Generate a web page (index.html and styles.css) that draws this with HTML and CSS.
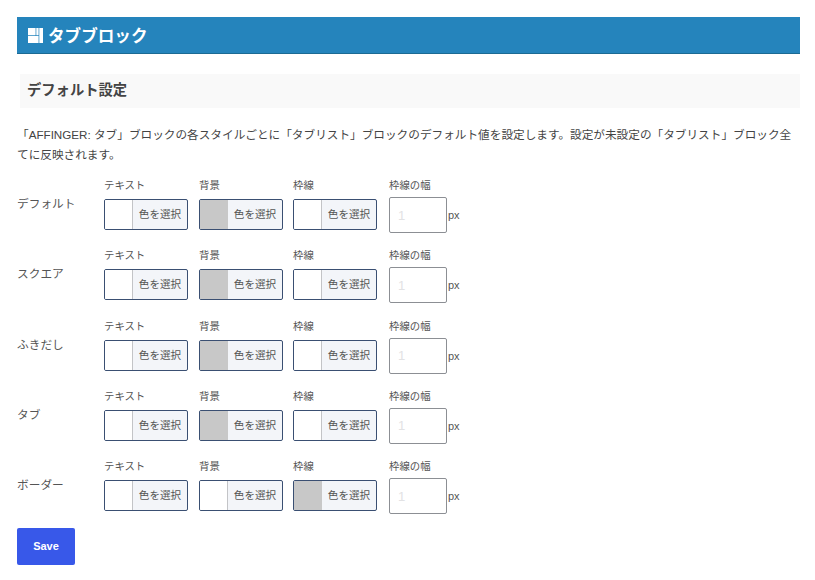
FILE: index.html
```html
<!DOCTYPE html>
<html lang="ja">
<head>
    <meta charset="UTF-8">
    <title>タブブロック</title>
    <link rel="stylesheet" href="styles.css">
</head>
<body>
    <div class="page-title">
        <svg class="title-icon" width="15" height="15" viewBox="0 0 15 15">
            <path fill="#fff" d="M0 0H7.6V7.2H0ZM8.3 0H10.6V7.2H8.3ZM0 7.9H10.6V15H0ZM11.3 0H15V15H11.3Z"/>
        </svg>
        <h1>タブブロック</h1>
    </div>

    <h2 class="section-title">デフォルト設定</h2>

    <p class="intro">「AFFINGER: タブ」ブロックの各スタイルごとに「タブリスト」ブロックのデフォルト値を設定します。設定が未設定の「タブリスト」ブロック全てに反映されます。</p>

    <div class="style-rows">
        <div class="style-row">
            <div class="row-label">デフォルト</div>
            <div class="field"><label>テキスト</label><button class="color-btn"><span class="swatch"></span><span class="btn-text">色を選択</span></button></div>
            <div class="field"><label>背景</label><button class="color-btn"><span class="swatch swatch-gray"></span><span class="btn-text">色を選択</span></button></div>
            <div class="field"><label>枠線</label><button class="color-btn"><span class="swatch"></span><span class="btn-text">色を選択</span></button></div>
            <div class="field"><label>枠線の幅</label><div class="width-wrap"><input type="text" class="width-input" placeholder="1"><span class="unit">px</span></div></div>
        </div>
        <div class="style-row">
            <div class="row-label">スクエア</div>
            <div class="field"><label>テキスト</label><button class="color-btn"><span class="swatch"></span><span class="btn-text">色を選択</span></button></div>
            <div class="field"><label>背景</label><button class="color-btn"><span class="swatch swatch-gray"></span><span class="btn-text">色を選択</span></button></div>
            <div class="field"><label>枠線</label><button class="color-btn"><span class="swatch"></span><span class="btn-text">色を選択</span></button></div>
            <div class="field"><label>枠線の幅</label><div class="width-wrap"><input type="text" class="width-input" placeholder="1"><span class="unit">px</span></div></div>
        </div>
        <div class="style-row">
            <div class="row-label">ふきだし</div>
            <div class="field"><label>テキスト</label><button class="color-btn"><span class="swatch"></span><span class="btn-text">色を選択</span></button></div>
            <div class="field"><label>背景</label><button class="color-btn"><span class="swatch swatch-gray"></span><span class="btn-text">色を選択</span></button></div>
            <div class="field"><label>枠線</label><button class="color-btn"><span class="swatch"></span><span class="btn-text">色を選択</span></button></div>
            <div class="field"><label>枠線の幅</label><div class="width-wrap"><input type="text" class="width-input" placeholder="1"><span class="unit">px</span></div></div>
        </div>
        <div class="style-row">
            <div class="row-label">タブ</div>
            <div class="field"><label>テキスト</label><button class="color-btn"><span class="swatch"></span><span class="btn-text">色を選択</span></button></div>
            <div class="field"><label>背景</label><button class="color-btn"><span class="swatch swatch-gray"></span><span class="btn-text">色を選択</span></button></div>
            <div class="field"><label>枠線</label><button class="color-btn"><span class="swatch"></span><span class="btn-text">色を選択</span></button></div>
            <div class="field"><label>枠線の幅</label><div class="width-wrap"><input type="text" class="width-input" placeholder="1"><span class="unit">px</span></div></div>
        </div>
        <div class="style-row">
            <div class="row-label">ボーダー</div>
            <div class="field"><label>テキスト</label><button class="color-btn"><span class="swatch"></span><span class="btn-text">色を選択</span></button></div>
            <div class="field"><label>背景</label><button class="color-btn"><span class="swatch"></span><span class="btn-text">色を選択</span></button></div>
            <div class="field"><label>枠線</label><button class="color-btn"><span class="swatch swatch-gray"></span><span class="btn-text">色を選択</span></button></div>
            <div class="field"><label>枠線の幅</label><div class="width-wrap"><input type="text" class="width-input" placeholder="1"><span class="unit">px</span></div></div>
        </div>
    </div>

    <button class="save-btn">Save</button>
</body>
</html>
```

FILE: styles.css
```css
body {
    margin: 0;
    padding: 17px 15px 0 17px;
    background-color: white;
    color: #444;
    font-family: "Liberation Sans", "Noto Sans CJK JP", sans-serif;
    font-size: 11px;
}
.page-title {
    display: flex;
    align-items: center;
    height: 37px;
    padding-left: 11px;
    background-color: #2584bc;
    border-bottom: 1px solid #1c6a93;
    box-sizing: border-box;
    color: white;
}
.title-icon {
    margin-right: 5px;
}
.page-title h1 {
    margin: 0;
    font-size: 16.6px;
    font-weight: 700;
}
.section-title {
    margin: 20px 0 0 3px;
    height: 34px;
    line-height: 33px;
    padding-left: 7px;
    background-color: #f9f9f9;
    color: #444;
    font-size: 14.3px;
    font-weight: 700;
}
.intro {
    margin: 17px 0 0;
    font-size: 11.65px;
    line-height: 20px;
}
.style-rows {
    margin-top: 12px;
}
.style-row {
    display: flex;
    height: 70.25px;
}
.row-label {
    width: 87px;
    padding-top: 18px;
    font-size: 11.7px;
    line-height: 18px;
    color: #555;
}
.field {
    width: 95px;
}
.field:nth-child(3) {
    width: 94px;
}
.field:nth-child(4) {
    width: 96px;
}
.field label {
    display: block;
    height: 22px;
    font-size: 10.4px;
    line-height: 18px;
    color: #555;
}
.color-btn {
    display: flex;
    width: 84px;
    height: 31px;
    padding: 0;
    background-color: #f3f5f9;
    border: 1px solid #3a4f72;
    border-radius: 2px;
    overflow: hidden;
    font-family: inherit;
    color: #555;
}
.swatch {
    width: 27px;
    height: 100%;
    background-color: white;
    border-right: 1px solid #c3c4c7;
}
.swatch-gray {
    background-color: #c8c8c8;
    border-right: none;
    width: 28px;
}
.btn-text {
    flex: 1;
    font-size: 10.6px;
    line-height: 28px;
    text-align: center;
}
.width-wrap {
    display: flex;
    align-items: center;
    margin-top: -2px;
}
.width-input {
    width: 58px;
    height: 36px;
    padding: 0 8px;
    box-sizing: border-box;
    border: 1px solid #8c8f94;
    border-radius: 2px;
    font-family: inherit;
    font-size: 13px;
}
.width-input::placeholder {
    color: #e2e2e4;
}
.unit {
    margin-left: 1px;
    font-size: 11px;
    color: #555;
}
.save-btn {
    display: block;
    width: 58px;
    height: 37px;
    padding: 0 0 2px;
    background-color: #3858e9;
    border: none;
    border-radius: 2px;
    color: white;
    font-family: inherit;
    font-size: 11px;
    font-weight: 700;
}
```
